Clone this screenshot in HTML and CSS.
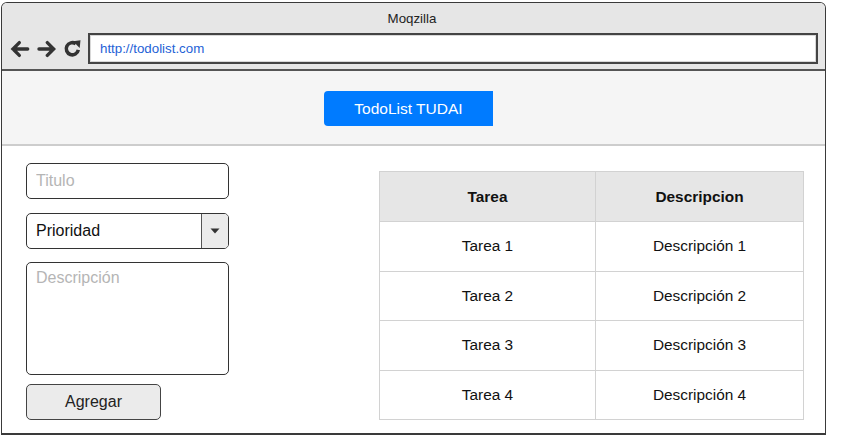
FILE: index.html
```html
<!DOCTYPE html>
<html lang="es">
<head>
<meta charset="utf-8">
<title>Moqzilla</title>
<link rel="stylesheet" href="styles.css">
</head>
<body>
<div class="window">
  <div class="titlebar">
    <div class="title">Moqzilla</div>
    <div class="nav">
      <div class="icons">
        <svg class="ico" width="20" height="18" viewBox="0 0 20 18">
          <path d="M18 9H3M9.5 2.5L3 9l6.5 6.5" fill="none" stroke="#333" stroke-width="3.4" stroke-linejoin="miter" stroke-linecap="round"/>
        </svg>
        <svg class="ico" width="20" height="18" viewBox="0 0 20 18">
          <path d="M2 9h15M10.5 2.5L17 9l-6.5 6.5" fill="none" stroke="#333" stroke-width="3.4" stroke-linejoin="miter" stroke-linecap="round"/>
        </svg>
        <svg class="ico" width="19" height="19" viewBox="0 0 19 19">
          <path d="M13 4.6A6.2 6.2 0 1 0 15.6 11" fill="none" stroke="#333" stroke-width="3.6"/>
          <path d="M10.2 2L17.8 1.2 17 9z" fill="#333"/>
        </svg>
      </div>
      <div class="address">http://todolist.com</div>
    </div>
  </div>
  <div class="header">
    <div class="brand">TodoList TUDAI</div>
  </div>
  <div class="main">
    <div class="form">
      <input class="field" type="text" placeholder="Titulo">
      <div class="select">
        <span class="select-text">Prioridad</span>
        <span class="select-arrow"><svg width="10" height="6" viewBox="0 0 10 6"><path d="M0.5 0.5h9L5 5.5z" fill="#333"/></svg></span>
      </div>
      <textarea class="area" placeholder="Descripción"></textarea>
      <button class="add" type="button">Agregar</button>
    </div>
    <div class="table">
      <div class="cell head">Tarea</div>
      <div class="cell head">Descripcion</div>
      <div class="cell">Tarea 1</div>
      <div class="cell">Descripción 1</div>
      <div class="cell">Tarea 2</div>
      <div class="cell">Descripción 2</div>
      <div class="cell">Tarea 3</div>
      <div class="cell">Descripción 3</div>
      <div class="cell">Tarea 4</div>
      <div class="cell">Descripción 4</div>
    </div>
  </div>
</div>
</body>
</html>
```
FILE: styles.css
```css
* { box-sizing: border-box; }
html, body { margin: 0; padding: 0; background: #fff; }
body {
  font-family: "Liberation Sans", Arial, sans-serif;
  color: #111;
  width: 843px;
  height: 441px;
  overflow: hidden;
}
.window {
  margin: 2px 0 0 1px;
  width: 825px;
  height: 433px;
  border: 1px solid #3a3a3a;
  border-bottom-width: 2px;
  border-radius: 6px 6px 0 0;
  display: flex;
  flex-direction: column;
  overflow: hidden;
}
.titlebar {
  background: #e6e6e6;
  height: 68px;
  border-bottom: 2px solid #555;
  display: flex;
  flex-direction: column;
}
.title {
  height: 30px;
  display: flex;
  align-items: center;
  justify-content: center;
  font-size: 13.3px;
  color: #222;
  padding-right: 3px;
}
.nav {
  display: flex;
  align-items: center;
  height: 31px;
  padding: 0 7px 0 8px;
  gap: 6px;
}
.icons {
  display: flex;
  align-items: center;
  gap: 7px;
  width: 72px;
}
.ico { display: block; }
.address {
  flex: 1;
  height: 31px;
  background: #fff;
  border: 2px solid #444;
  box-shadow: inset 0 0 0 1px #d8d8d8;
  display: flex;
  align-items: center;
  padding-left: 10px;
  font-size: 13.3px;
  color: #2462d6;
}
.header {
  background: #f5f5f5;
  height: 75px;
  border-bottom: 2px solid #cdcdcd;
  display: flex;
  align-items: center;
  justify-content: center;
  padding-right: 10px;
}
.brand {
  width: 169px;
  height: 35px;
  background: #007bff;
  color: #fff;
  border-radius: 4px 0 0 4px;
  display: flex;
  align-items: center;
  justify-content: center;
  font-size: 15.5px;
  margin-top: 2px;
}
.main {
  flex: 1;
  background: #fff;
  display: flex;
  justify-content: space-between;
  align-items: flex-start;
  padding: 17px 21px 0 24px;
}
.form {
  width: 203px;
  display: flex;
  flex-direction: column;
  align-items: flex-start;
}
.field, .select, .area {
  width: 203px;
  border: 1.5px solid #333;
  border-radius: 5px;
  font-family: "Liberation Sans", Arial, sans-serif;
  font-size: 16px;
  color: #111;
  background: #fff;
  outline: none;
}
.field {
  height: 36px;
  padding: 0 9px;
}
.field::placeholder, .area::placeholder { color: #b5b5b5; }
.select {
  margin-top: 14px;
  height: 36px;
  display: flex;
  align-items: stretch;
  overflow: hidden;
}
.select-text {
  flex: 1;
  display: flex;
  align-items: center;
  padding-left: 9px;
}
.select-arrow {
  width: 27px;
  border-left: 1px solid #555;
  background: #ebebeb;
  display: flex;
  align-items: center;
  justify-content: center;
}
.select-arrow svg { display: block; }
.area {
  margin-top: 13px;
  height: 113px;
  resize: none;
  padding: 6px 9px;
  display: block;
}
.add {
  margin-top: 9px;
  width: 135px;
  height: 36px;
  background: #ebebeb;
  border: 1.5px solid #444;
  border-radius: 5px;
  font-family: "Liberation Sans", Arial, sans-serif;
  font-size: 16px;
  color: #222;
  padding: 0;
}
.table {
  margin-top: 8px;
  display: grid;
  grid-template-columns: 215px 207px;
  grid-template-rows: 49px repeat(4, 48.5px);
  gap: 1px;
  background: #d2d2d2;
  border: 1px solid #d2d2d2;
}
.cell {
  background: #fff;
  display: flex;
  align-items: center;
  justify-content: center;
  font-size: 15.4px;
  color: #111;
}
.cell.head {
  background: #e6e6e6;
  font-weight: bold;
}
```
